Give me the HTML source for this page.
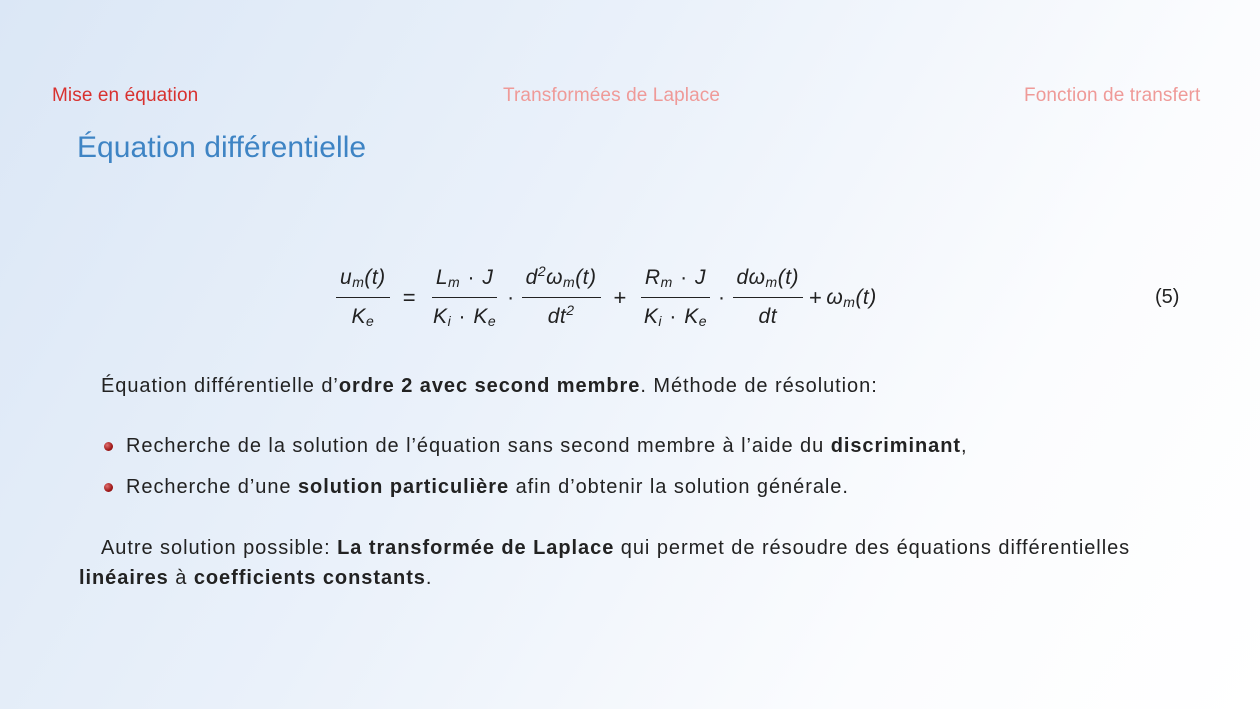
<!DOCTYPE html>
<html><head><meta charset="utf-8"><style>
body{margin:0;width:1260px;height:709px;overflow:hidden;font-family:"Liberation Sans",sans-serif;color:#222;
background:linear-gradient(120deg,#dbe7f6 0%,#eaf1fa 40%,#fbfcfe 75%,#ffffff 100%);position:relative}
.a{position:absolute;white-space:nowrap}
.nav{top:85px;font-size:19px;letter-spacing:0.1px}
.eq{position:absolute;left:332px;top:259px;display:flex;align-items:center;font-size:21px;font-style:italic;color:#222;letter-spacing:0.5px}
.fr{display:inline-flex;flex-direction:column;align-items:center;margin:0 4px}
.fr>span{padding:0 4px;line-height:38px;height:38px}
.fr>span:first-child{border-bottom:1px solid #222}
.op{font-style:normal;margin:0 9px;font-size:22px}
.dot{font-style:normal;margin:0 1px}
sub{font-size:14px;vertical-align:-3px;line-height:0}
sup{font-size:14px;vertical-align:8px;line-height:0}
.p{font-size:20px;letter-spacing:0.95px}
.b{position:absolute;width:9px;height:9px;border-radius:50%;background:radial-gradient(circle at 35% 35%,#e07070,#a01818 60%,#6a0a0a);}
</style></head><body>
<div class="a nav" style="left:52px;color:#d8312f">Mise en équation</div>
<div class="a nav" style="left:503px;color:#ef9a98">Transformées de Laplace</div>
<div class="a nav" style="left:1024px;color:#ef9a98">Fonction de transfert</div>
<div class="a" style="left:77px;top:131px;font-size:30px;letter-spacing:0.05px;color:#3e84c4">Équation différentielle</div>
<div class="eq">
<span class="fr"><span>u<sub>m</sub>(t)</span><span>K<sub>e</sub></span></span>
<span class="op">=</span>
<span class="fr"><span>L<sub>m</sub> <span class="dot">·</span> J</span><span>K<sub>i</sub> <span class="dot">·</span> K<sub>e</sub></span></span>
<span class="dot" style="margin:0 3px">·</span>
<span class="fr"><span>d<sup>2</sup>ω<sub>m</sub>(t)</span><span>dt<sup>2</sup></span></span>
<span class="op">+</span>
<span class="fr"><span>R<sub>m</sub> <span class="dot">·</span> J</span><span>K<sub>i</sub> <span class="dot">·</span> K<sub>e</sub></span></span>
<span class="dot" style="margin:0 3px">·</span>
<span class="fr"><span>dω<sub>m</sub>(t)</span><span>dt</span></span>
<span class="op" style="margin:0 4px 0 2px">+</span><span>ω<sub>m</sub>(t)</span>
</div>
<div class="a p" style="left:1155px;top:286px;letter-spacing:0">(5)</div>
<div class="a p" style="left:101px;top:375px">Équation différentielle d’<b>ordre 2 avec second membre</b>. Méthode de résolution:</div>
<div class="b" style="left:104px;top:442px"></div>
<div class="a p" style="left:126px;top:435px">Recherche de la solution de l’équation sans second membre à l’aide du <b>discriminant</b>,</div>
<div class="b" style="left:104px;top:483px"></div>
<div class="a p" style="left:126px;top:476px">Recherche d’une <b>solution particulière</b> afin d’obtenir la solution générale.</div>
<div class="a p" style="left:101px;top:537px">Autre solution possible: <b>La transformée de Laplace</b> qui permet de résoudre des équations différentielles</div>
<div class="a p" style="left:79px;top:567px"><b>linéaires</b> à <b>coefficients constants</b>.</div>
</body></html>
